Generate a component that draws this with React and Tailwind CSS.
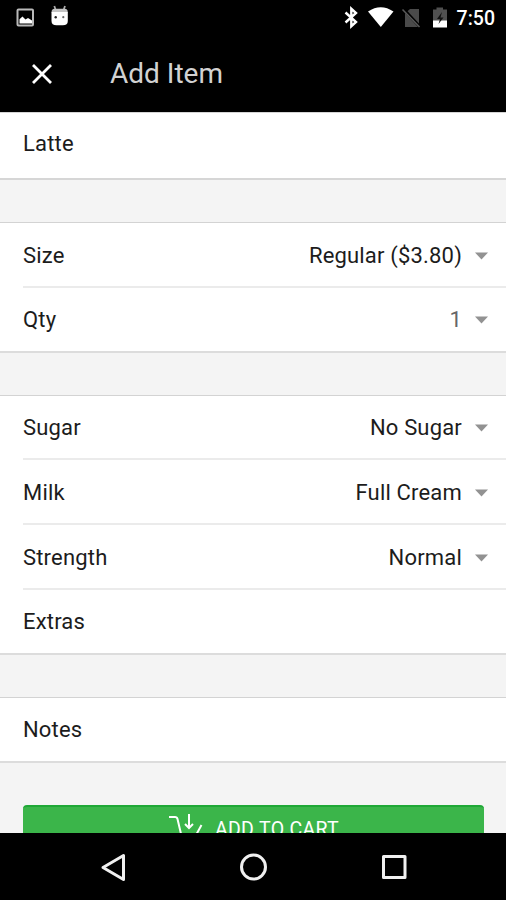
import React from "react";

const StatusBar = () => (
  <div className="flex h-9 items-center justify-between bg-black">
    <div className="flex pl-4">
      {/* Screenshot notification */}
      <svg width="20" height="36" viewBox="0 0 20 36">
        <rect x="1.5" y="9.5" width="15.5" height="16" rx="1" fill="none" stroke="#b9b9b9" strokeWidth="2" />
        <path d="M3.5 23.5v-4.3l3-2.7 3 3 2.5-1.5 4 2.5v3z" fill="#fff" />
      </svg>
      {/* Android head */}
      <svg className="ml-3.5" width="20" height="36" viewBox="0 0 20 36">
        <path d="M4.3 6l1.4 4M15 6l-1.4 4" stroke="#aaa" strokeWidth="1.8" />
        <path d="M1.5 12.5q0-3.7 3-3.7h10.3q3 0 3 3.7z" fill="#c4c4c4" />
        <path d="M1.5 12h16.3v9q0 4.3-5 4.3H6.5q-5 0-5-4.3z" fill="#fff" />
        <circle cx="5.7" cy="17.2" r="1.2" fill="#222" />
        <circle cx="13.3" cy="17.2" r="1.1" fill="#666" />
      </svg>
    </div>
    <div className="flex pr-[11px]">
      {/* Bluetooth */}
      <svg width="16" height="36" viewBox="343 0 16 36">
        <path d="M345.5 12.5l10.5 9.5-4.7 4.2V8.800l4.700 4.200-10.500 9.500" fill="none" stroke="#fff" strokeWidth="2.400" />
      </svg>
      {/* Wifi */}
      <svg className="ml-2" width="28" height="36" viewBox="367 0 28 36">
        <path d="M368 11.500q12.700-8.600 25.500 0L380.800 27z" fill="#fff" />
      </svg>
      {/* No sim */}
      <svg className="ml-1.5" width="20" height="36" viewBox="401 0 20 36">
        <path d="M410 9h9v18h-14V13.500z" fill="#4a4a4a" />
        <path d="M403.500 9l17 18.500" stroke="#000" strokeWidth="3" />
        <path d="M402.500 9.500l17 17.500" stroke="#5a5a5a" strokeWidth="1.500" />
      </svg>
      {/* Battery */}
      <svg className="ml-2.5" width="18" height="36" viewBox="431 0 18 36">
        <path d="M433 9.500h3.500V7.500h6.500v2h4V21h-14z" fill="#505050" />
        <path d="M433 20.500h14v7h-14z" fill="#fff" />
        <path d="M442 12l-5 7h3l-1.500 5 5-6.500h-3z" fill="#111" />
      </svg>
      <span className="ml-[8px] pt-px text-[19.500px] leading-9 font-medium tracking-normal text-white">7:50</span>
    </div>
  </div>
);

const TitleBar = () => (
  <div className="flex h-[77px] items-center border-b border-[#d5d5d5] bg-black">
    <button className="ml-8 h-5 w-5">
      <svg width="20" height="20" viewBox="0 0 20 20">
        <path d="M1 1l18 18M19 1L1 19" stroke="#fff" strokeWidth="2.800" />
      </svg>
    </button>
    <h1 className="ml-[58px] text-[28px] leading-8 tracking-normal text-[#d2d2d2]">Add Item</h1>
  </div>
);

const Row = ({ label, value, muted, last }) => (
  <div className={last ? "ml-[23px] flex h-[63px] items-center justify-between pt-[2px]" : "ml-[23px] flex h-[64.67px] items-center justify-between border-b-2 border-[#ebebeb] pt-[3px]"}>
    <span>{label}</span>
    {value && (
      <span className="flex items-center pr-[18px]">
        <span className={muted ? "text-[#666]" : ""}>{value}</span>
        <svg className="ml-[13px]" width="13" height="8" viewBox="0 0 13 8">
          <path d="M0 .500h13L6.500 7.500z" fill="#929292" />
        </svg>
      </span>
    )}
  </div>
);

const Card = ({ children }) => (
  <section className="border-t border-b-2 border-t-[#d3d3d3] border-b-[#dcdcdc] bg-white">{children}</section>
);

export default function App() {
  return (
    <div className="flex h-[900px] w-[506px] flex-col overflow-hidden bg-[#f4f4f4] font-['Roboto',sans-serif] text-[22px] leading-7 tracking-[0.18px] text-[#1c1c1c]">
      <StatusBar />
      <TitleBar />
      <main className="flex h-[720px] flex-col overflow-hidden">
        <section className="h-[67px] shrink-0 border-b-2 border-[#d6d6d6] bg-white pt-[17px] pl-[23px]">Latte</section>
        <div className="mt-[42px] flex shrink-0 flex-col gap-[42px]">
          <Card>
            <Row label="Size" value="Regular ($3.80)" />
            <Row label="Qty" value="1" muted last />
          </Card>
          <Card>
            <Row label="Sugar" value="No Sugar" />
            <Row label="Milk" value="Full Cream" />
            <Row label="Strength" value="Normal" />
            <Row label="Extras" last />
          </Card>
          <Card>
            <Row label="Notes" last />
          </Card>
        </div>
        <button className="mr-[22px] ml-[23px] mt-[42px] flex h-[48px] shrink-0 items-center justify-center rounded-sm border-t-2 border-[#1fa836] bg-[#3bb54a] text-[19.500px] tracking-[0.3px] text-white">
          <svg className="mr-[11px]" width="36" height="32" viewBox="0 0 36 32" fill="none" stroke="#fff" strokeWidth="2">
            <path d="M1 3h6q2 0 2.500 2l4 17h14l6-11M21 0v13M17 10l4 4 4-4" />
          </svg>
          ADD TO CART
        </button>
      </main>
      <nav className="flex h-[67px] items-center justify-center bg-black">
        <svg width="506" height="66" viewBox="0 0 506 66" fill="none" stroke="#f0f0f0" strokeWidth="3" strokeLinejoin="round">
          <path d="M123.500 21.500v24L103 33.500z" />
          <circle cx="253.500" cy="33" r="12" />
          <rect x="383.500" y="22.500" width="21.500" height="21" />
        </svg>
      </nav>
    </div>
  );
}
